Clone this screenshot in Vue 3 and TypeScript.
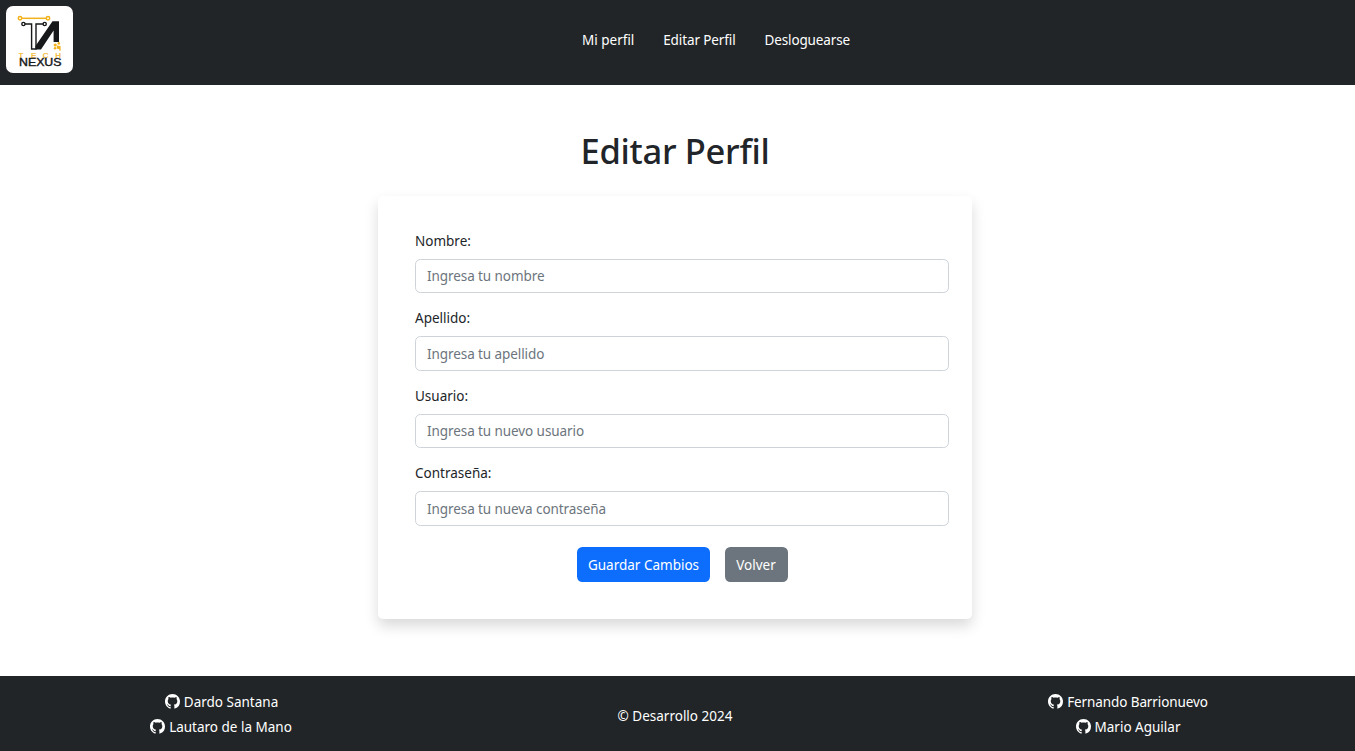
<script setup lang="ts">
interface Field { id: string; label: string; placeholder: string; type: string }

const links: string[] = ['Mi perfil', 'Editar Perfil', 'Desloguearse']
const fields: Field[] = [
  { id: 'nombre', label: 'Nombre:', placeholder: 'Ingresa tu nombre', type: 'text' },
  { id: 'apellido', label: 'Apellido:', placeholder: 'Ingresa tu apellido', type: 'text' },
  { id: 'usuario', label: 'Usuario:', placeholder: 'Ingresa tu nuevo usuario', type: 'text' },
  { id: 'contrasena', label: 'Contraseña:', placeholder: 'Ingresa tu nueva contraseña', type: 'password' },
]
const authors: string[][] = [
  ['Dardo Santana', 'Lautaro de la Mano'],
  [],
  ['Fernando Barrionuevo', 'Mario Aguilar'],
]
</script>

<template>
  <div class="page">
    <header class="navbar">
      <a class="brand" href="#">
        <svg viewBox="0 0 67 67" width="67" height="67" aria-label="Tech Nexus">
          <rect width="67" height="67" rx="7" fill="#fff" />
          <g fill="none" stroke="#f2b21b" stroke-width="1.5">
            <path d="M16 12.3H40" />
            <circle cx="14" cy="12.3" r="1.7" />
            <circle cx="42" cy="12.3" r="1.7" />
          </g>
          <g fill="none" stroke="#17181a" stroke-width="1.4">
            <circle cx="17.4" cy="18" r="1.6" />
            <circle cx="38.7" cy="18" r="1.6" />
            <path d="M19 18H25.6V43H30V18H37" />
          </g>
          <path d="M29.5 43.6V40L46.5 15.3H53V36H47.6V24.5L35 43.6Z" fill="#17181a" />
          <g fill="#f2b21b">
            <circle cx="49.2" cy="39" r="1.6" />
            <circle cx="52.8" cy="37.4" r="1.3" />
            <circle cx="49" cy="42.2" r="1.2" />
            <path d="M51 39.6l3.6 .6v4.6h-1.2v-1.6l-2.8-.6z" />
          </g>
          <g class="logo-tech">
            <text x="12.5" y="51.8">T</text>
            <text x="25" y="51.8">E</text>
            <text x="36.8" y="51.8">C</text>
            <text x="49.2" y="51.8">H</text>
          </g>
          <text class="logo-nexus" x="13" y="60.2" textLength="42.5" lengthAdjust="spacingAndGlyphs">NEXUS</text>
        </svg>
      </a>
      <nav class="nav">
        <a v-for="link in links" :key="link" href="#">{{ link }}</a>
      </nav>
    </header>

    <main>
      <h1>Editar Perfil</h1>
      <form class="card" @submit.prevent>
        <div v-for="f in fields" :key="f.id" class="field">
          <label :for="f.id">{{ f.label }}</label>
          <input :id="f.id" :type="f.type" :placeholder="f.placeholder" />
        </div>
        <div class="actions">
          <button type="submit" class="btn primary">Guardar Cambios</button>
          <button type="button" class="btn secondary">Volver</button>
        </div>
      </form>
    </main>

    <footer>
      <div v-for="(group, i) in authors" :key="i" class="column">
        <span v-if="!group.length" class="copy">© Desarrollo 2024</span>
        <a v-for="name in group" :key="name" href="#">
          <svg viewBox="0 0 16 16" width="15" height="15" fill="currentColor" aria-hidden="true">
            <path d="M8 0C3.58 0 0 3.58 0 8c0 3.54 2.29 6.53 5.47 7.59.4.07.55-.17.55-.38 0-.19-.01-.82-.01-1.49-2.01.37-2.53-.49-2.69-.94-.09-.23-.48-.94-.82-1.13-.28-.15-.68-.52-.01-.53.63-.01 1.08.58 1.23.82.72 1.21 1.87.87 2.33.66.07-.52.28-.87.51-1.07-1.78-.2-3.64-.89-3.64-3.95 0-.87.31-1.59.82-2.15-.08-.2-.36-1.02.08-2.12 0 0 .67-.21 2.2.82.64-.18 1.32-.27 2-.27s1.36.09 2 .27c1.53-1.04 2.2-.82 2.2-.82.44 1.1.16 1.92.08 2.12.51.56.82 1.27.82 2.15 0 3.07-1.87 3.75-3.65 3.95.29.25.54.73.54 1.48 0 1.07-.01 1.93-.01 2.2 0 .21.15.46.55.38A8.01 8.01 0 0 0 16 8c0-4.42-3.58-8-8-8" />
          </svg>
          <span>{{ name }}</span>
        </a>
      </div>
    </footer>
  </div>
</template>

<style>
body { margin: 0; background: #fff; overflow: hidden; }
</style>

<style scoped>
.page {
  display: flex;
  flex-direction: column;
  height: 751px;
  font: 13.5px/21.6px "Noto Sans", "Open Sans", sans-serif;
  color: #212529;
}
* { box-sizing: border-box; }
a { color: #fff; text-decoration: none; }
.navbar {
  display: grid;
  grid-template-columns: 576px 1fr;
  height: 85px;
  padding: 6px;
  background: #212528;
  flex: none;
}
.brand svg { display: block; }
.logo-tech { font: 8px "Liberation Sans", sans-serif; fill: #f2b21b; stroke: #f2b21b; stroke-width: 0.2px; }
.logo-nexus { font: 10.3px "Liberation Sans", sans-serif; fill: #17181a; stroke: #17181a; stroke-width: 0.4px; }
.nav { display: flex; gap: 28.8px; padding-top: 24px; }
.nav a:nth-child(2) { letter-spacing: -0.1px; }
.nav a:nth-child(3) { letter-spacing: -0.12px; }
main {
  flex: 1;
  display: flex;
  flex-direction: column;
  align-items: center;
  padding-right: 5px;
}
h1 {
  margin: 44px 0 24px;
  font-size: 34.5px;
  font-weight: 500;
  line-height: 43px;
  letter-spacing: -0.3px;
}
.card {
  width: 594px;
  height: 422.5px;
  padding: 35px 23px 0 37px;
  border-radius: 5px;
  background: #fff;
  box-shadow: 0 7px 14px rgba(0, 0, 0, 0.15);
}
.field { height: 77.4px; }
label { display: block; height: 28px; }
input {
  display: block;
  width: 100%;
  height: 34.4px;
  padding: 0.4px 11px 0;
  border: 1px solid #ced4da;
  border-radius: 5.4px;
  background: #fff;
  font: inherit;
  letter-spacing: -0.08px;
  color: #212529;
}
input::placeholder { color: #6c757d; opacity: 1; }
.actions { display: flex; justify-content: center; gap: 15px; padding-top: 6.4px; }
.btn {
  height: 35px;
  padding: 2px 0 0;
  border: 0;
  border-radius: 5.4px;
  font: inherit;
  color: #fff;
}
.primary { width: 133px; padding-left: 1px; background: #0d6efd; }
.secondary { width: 63px; background: #6c757d; }
footer {
  display: grid;
  grid-template-columns: 442px 466px 1fr;
  height: 75px;
  flex: none;
  background: #212528;
  color: #fff;
}
.column { display: flex; flex-direction: column; align-items: center; padding-top: 16px; gap: 3.5px; }
.column:last-child { padding-right: 7px; letter-spacing: -0.1px; }
.column a { display: flex; gap: 4px; }
.column:first-child a:first-child { margin-left: 1px; }
.column svg { margin-top: 2px; }
.column:last-child a:last-child { letter-spacing: 0; }
.copy { margin-top: 14px; }
</style>
